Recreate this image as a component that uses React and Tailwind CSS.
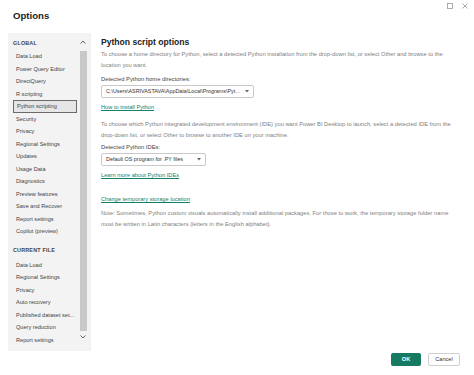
const globalItems = [
  "Data Load",
  "Power Query Editor",
  "DirectQuery",
  "R scripting",
  "Python scripting",
  "Security",
  "Privacy",
  "Regional Settings",
  "Updates",
  "Usage Data",
  "Diagnostics",
  "Preview features",
  "Save and Recover",
  "Report settings",
  "Copilot (preview)",
];

const fileItems = [
  "Data Load",
  "Regional Settings",
  "Privacy",
  "Auto recovery",
  "Published dataset set...",
  "Query reduction",
  "Report settings",
];

function NavItem({ label, active }) {
  return (
    <div
      className={`h-[12.5px] flex items-center ml-[5px] mr-[2px] pl-[3px] ${
        active ? "border border-[#6b6b6b] bg-[#e6e6e6]" : ""
      }`}
    >
      <span className="text-[5.6px] text-[#444] whitespace-nowrap">{label}</span>
    </div>
  );
}

function Select({ value, width }) {
  return (
    <div
      className={`${width} h-[13px] border border-[#c9c9c9] rounded-[2px] flex items-center justify-between pl-[4px] pr-[4px] bg-white`}
    >
      <span className="text-[5.4px] text-[#333] whitespace-nowrap">{value}</span>
      <svg width="4" height="3" viewBox="0 0 4 3">
        <path d="M0 0 L4 0 L2 2.5 Z" fill="#666" />
      </svg>
    </div>
  );
}

export default function App() {
  return (
    <div
      className="w-[474px] h-[375px] bg-white relative overflow-hidden"
      style={{ fontFamily: '"Liberation Sans", Arial, sans-serif' }}
    >
      {/* Title bar */}
      <div className="flex items-start justify-between h-[33px]">
        <h1 className="text-[9.6px] font-semibold text-[#222] ml-[13px] mt-[9px]">Options</h1>
        <div className="flex items-center gap-[9px] mr-[6px] mt-[3px]">
          <svg width="6" height="6" viewBox="0 0 6 6">
            <rect x="0.5" y="0.5" width="5" height="5" fill="none" stroke="#999" strokeWidth="0.8" />
          </svg>
          <svg width="6" height="6" viewBox="0 0 6 6">
            <path d="M0.5 0.5 L5.5 5.5 M5.5 0.5 L0.5 5.5" stroke="#999" strokeWidth="0.8" />
          </svg>
        </div>
      </div>

      <div className="flex">
        {/* Sidebar */}
        <div className="w-[83px] h-[318px] ml-[8px] bg-[#f3f3f3] flex">
          <div className="flex-1 pt-[4px]">
            <div className="h-[12px] flex items-center pl-[5px] text-[5.4px] font-bold text-[#444] tracking-[0.2px]">
              GLOBAL
            </div>
            <div className="mt-[1px]">
              {globalItems.map((l) => (
                <NavItem key={l + "g"} label={l} active={l === "Python scripting"} />
              ))}
            </div>
            <div className="h-[12px] mt-[7px] flex items-center pl-[5px] text-[5.4px] font-bold text-[#444] tracking-[0.2px]">
              CURRENT FILE
            </div>
            <div className="mt-[2px]">
              {fileItems.map((l) => (
                <NavItem key={l + "f"} label={l} />
              ))}
            </div>
          </div>
          <div className="w-[8px] mr-[4px] flex flex-col items-center">
            <div className="h-[18px] flex items-center">
              <svg width="6" height="4" viewBox="0 0 6 4">
                <path d="M0.5 3.5 L3 1 L5.5 3.5" fill="none" stroke="#555" strokeWidth="0.9" />
              </svg>
            </div>
            <div className="w-[7px] h-[280px] bg-[#c8c8c8]" />
            <div className="h-[12px] flex items-center">
              <svg width="6" height="4" viewBox="0 0 6 4">
                <path d="M0.5 0.5 L3 3 L5.5 0.5" fill="none" stroke="#555" strokeWidth="0.9" />
              </svg>
            </div>
          </div>
        </div>

        {/* Content */}
        <div className="ml-[10px] flex-1 pr-[6px]">
          <h2 className="text-[8.6px] font-semibold text-[#222] mt-[3px] leading-[12px]">
            Python script options
          </h2>
          <p className="text-[5.75px] leading-[11px] text-[#808080] mt-[1px]">
            To choose a home directory for Python, select a detected Python installation from the drop-down list, or select Other and browse to the
            <br />
            location you want.
          </p>
          <div className="text-[5.85px] text-[#444] mt-[3px] leading-[11px]">Detected Python home directories:</div>
          <Select
            width="w-[153px]"
            value="C:\Users\ASRIVASTAVA\AppData\Local\Programs\Pyt..."
          />
          <div className="text-[5.7px] text-[#14806a] underline mt-[4px] leading-[11px]">How to install Python</div>

          <p className="text-[5.75px] leading-[11px] text-[#808080] mt-[6px]">
            To choose which Python integrated development environment (IDE) you want Power BI Desktop to launch, select a detected IDE from the
            <br />
            drop-down list, or select Other to browse to another IDE on your machine.
          </p>
          <div className="text-[5.85px] text-[#444] mt-[1px] leading-[11px]">Detected Python IDEs:</div>
          <Select width="w-[105px]" value="Default OS program for .PY files" />
          <div className="text-[5.7px] text-[#14806a] underline mt-[4px] leading-[11px]">Learn more about Python IDEs</div>

          <div className="text-[5.7px] text-[#14806a] underline mt-[13px] leading-[11px]">Change temporary storage location</div>
          <p className="text-[5.75px] leading-[11px] text-[#808080] mt-[3px]">
            Note: Sometimes, Python custom visuals automatically install additional packages. For those to work, the temporary storage folder name
            <br />
            must be written in Latin characters (letters in the English alphabet).
          </p>
        </div>
      </div>

      {/* Footer buttons */}
      <div className="flex justify-end gap-[7px] mr-[14px] mt-[2px]">
        <button className="w-[30px] h-[13px] bg-[#167a63] rounded-[2px] text-white text-[5.6px] font-semibold">
          OK
        </button>
        <button className="w-[32px] h-[13px] bg-white border border-[#cfcfcf] rounded-[2px] text-[#333] text-[5.6px]">
          Cancel
        </button>
      </div>
    </div>
  );
}
